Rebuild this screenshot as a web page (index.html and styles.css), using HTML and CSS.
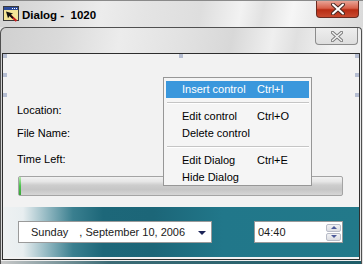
FILE: index.html
```html
<!DOCTYPE html>
<html lang="en">
<head>
    <meta charset="UTF-8">
    <title>Dialog - 1020</title>
    <link rel="stylesheet" href="styles.css">
</head>
<body>
    <div class="titlebar">
        <svg class="app-icon" width="16" height="16" viewBox="0 0 16 16">
            <rect x="0.5" y="0.5" width="15" height="14" fill="#f3e497" stroke="#3a3a3a"/>
            <rect x="1" y="1" width="14" height="3" fill="#2c4c9c"/>
            <rect x="9" y="2" width="1" height="1" fill="#fff"/>
            <rect x="11" y="2" width="1" height="1" fill="#fff"/>
            <rect x="13" y="2" width="1" height="1" fill="#fff"/>
            <line x1="7.5" y1="9.5" x2="13.5" y2="15" stroke="#c81e1e" stroke-width="2.2"/>
            <path d="M3 5.5 L10 7.5 L7.8 8.8 L10.5 11.5 L9.3 12.7 L6.6 10 L5 12.2 Z" fill="#111"/>
        </svg>
        <span class="title">Dialog -&nbsp; 1020</span>
        <div class="close-btn">
            <svg width="14" height="12" viewBox="0 0 14 12">
                <path d="M2 1.5 L12 10.5 M12 1.5 L2 10.5" stroke="#4a2a24" stroke-width="4" stroke-linecap="round"/>
                <path d="M2 1.5 L12 10.5 M12 1.5 L2 10.5" stroke="#fff" stroke-width="2" stroke-linecap="round"/>
            </svg>
        </div>
    </div>

    <div class="frame">
        <div class="caption">
            <div class="child-close">
                <svg width="12" height="11" viewBox="0 0 12 11">
                    <path d="M1.5 1.5 L10.5 9.5 M10.5 1.5 L1.5 9.5" stroke="#7d7d7d" stroke-width="3.4" stroke-linecap="round"/>
                    <path d="M1.5 1.5 L10.5 9.5 M10.5 1.5 L1.5 9.5" stroke="#f4f4f4" stroke-width="1.4" stroke-linecap="round"/>
                </svg>
            </div>
        </div>

        <div class="client">
            <span class="handle h-tl"></span>
            <span class="handle h-tc"></span>
            <span class="handle h-tr"></span>
            <span class="handle h-l1"></span>
            <span class="handle h-r1"></span>
            <span class="handle h-l2"></span>
            <span class="handle h-r2"></span>

            <div class="fields">
                <div class="label">Location:</div>
                <div class="label label-file">File Name:</div>
                <div class="label label-time">Time Left:</div>
            </div>

            <div class="progress"><div class="progress-fill"></div></div>

            <div class="band">
                <div class="datepicker">
                    <span class="day">Sunday</span>
                    <span>, September 10, 2006</span>
                    <span class="dd-arrow"></span>
                </div>
                <div class="timebox">
                    <span>04:40</span>
                    <div class="spin">
                        <div class="spin-btn"><span class="tri-up"></span></div>
                        <div class="spin-btn"><span class="tri-down"></span></div>
                    </div>
                </div>
            </div>

            <div class="menu">
                <div class="menu-item active"><span>Insert control</span><span>Ctrl+I</span></div>
                <div class="menu-sep"></div>
                <div class="menu-item"><span>Edit control</span><span>Ctrl+O</span></div>
                <div class="menu-item"><span>Delete control</span><span></span></div>
                <div class="menu-sep"></div>
                <div class="menu-item"><span>Edit Dialog</span><span>Ctrl+E</span></div>
                <div class="menu-item"><span>Hide Dialog</span><span></span></div>
            </div>
        </div>
        <div class="frame-bottom"></div>
    </div>
</body>
</html>
```

FILE: styles.css
```css
body {
    margin: 0;
    width: 363px;
    height: 264px;
    overflow: hidden;
    font-family: "Liberation Sans", Arial, sans-serif;
    font-size: 11px;
    color: #000;
    background: #e2e2e2;
}
.titlebar {
    display: flex;
    align-items: flex-start;
    height: 27px;
    box-sizing: border-box;
    border-top: 1px solid #8a8a8a;
    background: linear-gradient(100deg, #d2d2d2 0%, #dcdcdc 12%, #ececec 28%, #e4e4e4 40%, #dedede 55%, #f2f2f2 66%, #e2e2e2 72%, #f6f6f6 80%, #e8e8e8 88%, #dadada 100%);
}
.app-icon {
    margin: 5px 0 0 3px;
}
.title {
    margin: 8px 0 0 3px;
    font-weight: bold;
    font-size: 11.5px;
    line-height: 13px;
}
.close-btn {
    display: flex;
    justify-content: center;
    align-items: center;
    margin-left: auto;
    margin-right: 4px;
    width: 43px;
    height: 17px;
    box-sizing: border-box;
    border: 1px solid #6a2a20;
    border-top: none;
    border-radius: 0 0 4px 4px;
    background: linear-gradient(#e8a496 0%, #d8604a 45%, #b82c14 55%, #c84a30 100%);
}
.frame {
    margin-right: 1px;
    height: 237px;
    box-sizing: border-box;
    border: 1px solid #505050;
    border-bottom: none;
    border-radius: 6px 4px 0 0;
    background: linear-gradient(100deg, #d0d0d0 0%, #dadada 15%, #ececec 30%, #e2e2e2 45%, #d8d8d8 58%, #efefef 68%, #e0e0e0 74%, #f4f4f4 84%, #e4e4e4 100%);
    display: flex;
    flex-direction: column;
}
.caption {
    display: flex;
    justify-content: flex-end;
    height: 25px;
    padding-right: 3px;
}
.child-close {
    display: flex;
    justify-content: center;
    align-items: center;
    width: 43px;
    height: 17px;
    box-sizing: border-box;
    border: 1px solid #8c8c8c;
    border-top: none;
    border-radius: 0 0 4px 4px;
    background: linear-gradient(#eeeeee, #dedede);
}
.client {
    position: relative;
    margin: 0 1px;
    height: 205px;
    border: 1px solid #2e2e2e;
    background: #f2f2f2;
    display: flex;
    flex-direction: column;
}
.frame-bottom {
    flex: 1;
    border-top: 1px solid #f0f0f0;
    background: linear-gradient(to right, #c8c8c8, #3c6c76 30%, #1e5c68);
}
.handle {
    position: absolute;
    width: 4px;
    height: 4px;
    background: #b6bed2;
}
.h-tl { left: 0; top: 0; }
.h-tc { left: 176px; top: 0; }
.h-tr { right: 0; top: 0; }
.h-l1 { left: 0; top: 19px; }
.h-r1 { right: 0; top: 19px; }
.h-l2 { left: 0; top: 39px; }
.h-r2 { right: 0; top: 39px; }
.fields {
    display: flex;
    flex-direction: column;
    padding: 50px 0 0 14px;
}
.label {
    line-height: 13px;
}
.label-file {
    margin-top: 10px;
}
.label-time {
    margin-top: 13px;
}
.progress {
    margin: 10px 0 0 15px;
    width: 325px;
    height: 20px;
    box-sizing: border-box;
    border: 1px solid #a4a4a4;
    border-radius: 2px;
    background: linear-gradient(#f2f2f2 0%, #e6e6e6 25%, #cdcdcd 45%, #c6c6c6 70%, #d6d6d6 100%);
}
.progress-fill {
    width: 2px;
    height: 100%;
    background: linear-gradient(#b6eab0, #4cc24c 50%, #3aa63a);
}
.band {
    display: flex;
    align-items: flex-start;
    margin-top: 11px;
    height: 50px;
    box-sizing: border-box;
    padding: 14px 0 0 15px;
    background: linear-gradient(to right, #eef1f2 0px, #e8eef0 20px, #8fb6c0 45px, #3a7f8f 70px, #1d6779 100px, #1c6678 150px, #21778a 220px, #22798a 100%);
}
.datepicker {
    display: flex;
    align-items: center;
    width: 194px;
    height: 22px;
    box-sizing: border-box;
    padding-left: 12px;
    border: 1px solid #9a9a9a;
    background: #fff;
    color: #1a1a1a;
}
.day {
    margin-right: 11px;
}
.dd-arrow {
    margin: 1px 0 0 auto;
    margin-right: 5px;
    width: 0;
    height: 0;
    border-left: 4px solid transparent;
    border-right: 4px solid transparent;
    border-top: 4px solid #1c2458;
}
.timebox {
    display: flex;
    align-items: center;
    margin-left: 42px;
    width: 89px;
    height: 22px;
    box-sizing: border-box;
    padding: 0 1px 0 3px;
    border: 1px solid #9a9a9a;
    background: #fff;
    color: #1a1a1a;
}
.spin {
    display: flex;
    flex-direction: column;
    gap: 1px;
    margin-left: auto;
}
.spin-btn {
    display: flex;
    justify-content: center;
    align-items: center;
    width: 15px;
    height: 8px;
    box-sizing: border-box;
    border: 1px solid #b8bcc8;
    border-radius: 2px;
    background: linear-gradient(#f2f2f4, #dcdde2);
}
.tri-up, .tri-down {
    width: 0;
    height: 0;
    border-left: 3px solid transparent;
    border-right: 3px solid transparent;
}
.tri-up {
    border-bottom: 3px solid #4c5a9a;
}
.tri-down {
    border-top: 3px solid #4c5a9a;
}
.menu {
    position: absolute;
    left: 160px;
    top: 23px;
    width: 149px;
    height: 109px;
    box-sizing: border-box;
    padding: 3px 2px 2px;
    border: 1px solid #979797;
    background: #f5f5f5;
}
.menu-item {
    display: grid;
    grid-template-columns: 75px auto;
    height: 17px;
    line-height: 17px;
    padding-left: 16px;
}
.menu-item.active {
    background: #3a97dc;
    color: #fff;
}
.menu-sep {
    height: 1px;
    margin: 4px 0 4px 1px;
    background: #c5c5c5;
    border-bottom: 1px solid #fff;
}
```
